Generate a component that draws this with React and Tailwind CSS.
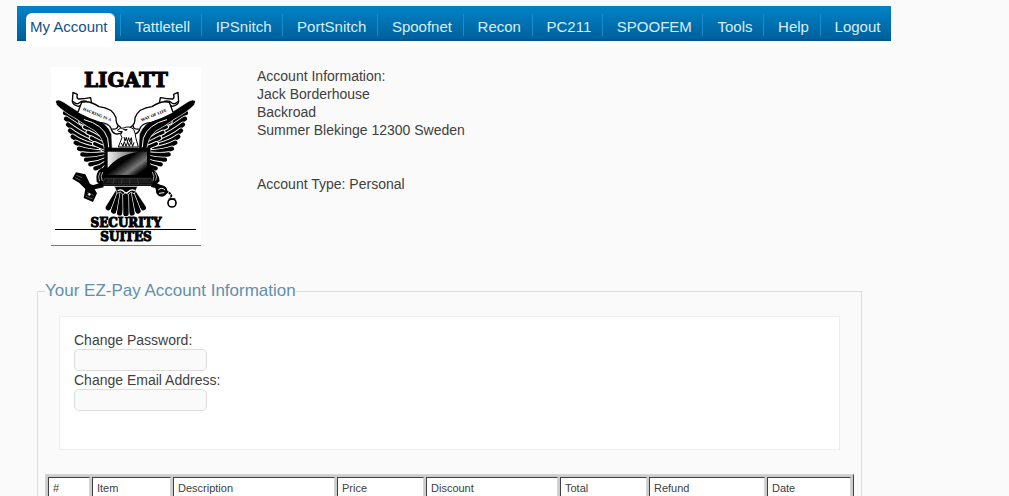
import React, { useState } from "react";

const navItems = [
  "Tattletell",
  "IPSnitch",
  "PortSnitch",
  "Spoofnet",
  "Recon",
  "PC211",
  "SPOOFEM",
  "Tools",
  "Help",
  "Logout",
];

const columns = [
  { name: "#", width: "w-[42px]" },
  { name: "Item", width: "w-[79px]" },
  { name: "Description", width: "w-[162px]" },
  { name: "Price", width: "w-[87px]" },
  { name: "Discount", width: "w-[132px]" },
  { name: "Total", width: "w-[87px]" },
  { name: "Refund", width: "w-[116px]" },
  { name: "Date", width: "w-[84px]" },
];

// outer row of feathers, from the wing tip down to the body
const longFeathers = [
  "M42 84 Q70 96 108 130",
  "M45 101 Q70 118 112 146",
  "M51 119 Q74 138 118 160",
  "M57 137 Q80 156 124 173",
  "M65 155 Q88 172 130 183",
  "M74 173 Q96 186 138 193",
  "M84 191 Q108 199 146 202",
  "M94 208 Q118 212 156 208",
  "M105 224 Q128 225 160 217",
  "M118 238 Q140 237 162 226",
  "M133 250 Q148 248 164 236",
  "M148 261 Q156 259 165 248",
];

const shortFeathers = [
  "M80 96 Q96 102 116 122",
  "M90 111 Q106 117 130 136",
  "M101 126 Q118 132 140 150",
  "M111 142 Q128 149 150 164",
  "M121 159 Q136 167 158 178",
  "M131 176 Q146 183 164 190",
];

const tailFeathers = [
  "M202 320 L172 368",
  "M245 320 L277 368",
  "M208 322 L188 378",
  "M239 322 L261 378",
  "M216 324 L206 384",
  "M232 324 L243 384",
  "M224 325 L225 386",
];

const Wing = () => (
  <g fill="none" strokeLinecap="round">
    <path d="M36 66 Q60 112 84 152 Q106 200 140 232 L166 232 V130 L100 88Z" fill="#000" />
    {longFeathers.map((d) => (
      <g key={d}>
        <path d={d} stroke="#fff" strokeWidth="18" />
        <path d={d} stroke="#000" strokeWidth="13" />
      </g>
    ))}
    {shortFeathers.map((d) => (
      <g key={d}>
        <path d={d} stroke="#fff" strokeWidth="16" />
        <path d={d} stroke="#000" strokeWidth="10" />
      </g>
    ))}
    <path
      d="M14 49 Q20 40 36 50 L76 76 Q102 94 130 100 Q168 112 182 148 L184 194 L160 194 Q156 156 132 138 Q106 124 76 102 Q36 80 17 60Z"
      fill="#000"
      stroke="#fff"
      strokeWidth="2"
    />
    <path d="M100 104 Q156 118 170 160 L173 186" stroke="#fff" strokeWidth="3" />
  </g>
);

const Ribbon = () => (
  <g fill="#fff" stroke="#000" strokeWidth="4" strokeLinejoin="round">
    <path d="M66 22 L79 28 Q76 39 82 42 Q98 42 119 38 L122 57 Q96 58 82 64 Q66 60 64 50Z" />
    <path d="M66 49 Q75 60 84 54 Q94 45 108 49" fill="none" />
    <path d="M92 52 Q114 45 144 65 Q184 69 195 98 Q194 119 208 126 L213 143 Q187 155 180 130 Q174 114 146 112 Q114 102 80 84Z" />
    <path d="M184 132 Q200 134 201 122" fill="none" />
  </g>
);

const Logo = () => (
  <svg viewBox="0 0 150 178" className="block w-[150px] h-[178px] bg-white" role="img" aria-label="Ligatt Security Suites">
    <defs>
      <linearGradient id="screen" x1="0" y1="0" x2="1" y2="0.8">
        <stop offset="0" stopColor="#222" />
        <stop offset="0.45" stopColor="#000" />
        <stop offset="0.75" stopColor="#777" />
        <stop offset="0.95" stopColor="#000" />
      </linearGradient>
      <linearGradient id="glare" x1="0" y1="0" x2="1" y2="0">
        <stop offset="0" stopColor="#eee" />
        <stop offset="1" stopColor="#555" />
      </linearGradient>
    </defs>

    <g fontFamily="'DejaVu Serif', serif" fontWeight="700" textAnchor="middle" stroke="#000" strokeWidth="1">
      <text x="75" y="20" fontSize="20">LIGATT</text>
      <text x="75" y="160" fontSize="12">SECURITY</text>
      <text x="75" y="174" fontSize="12">SUITES</text>
    </g>
    <path d="M4 162.5 H145" stroke="#000" />

    <g transform="translate(0 18) scale(0.3333)">
      <Wing />
      <g transform="translate(447 0) scale(-1 1)">
        <Wing />
      </g>
      <Ribbon />
      <g transform="translate(447 0) scale(-1 1)">
        <Ribbon />
      </g>
      <g fontFamily="'DejaVu Serif', serif" fontWeight="700" fontSize="11" textAnchor="middle">
        <text transform="translate(137 92) rotate(22)">HACKING IS A</text>
        <text transform="translate(310 94) rotate(-22)">WAY OF LIFE</text>
      </g>

      {/* head */}
      <path
        d="M199 136 Q207 127 219 129 Q234 121 248 133 Q254 145 254 157 L262 186 H202 L213 158 L209 149 L214 140 L203 139Z"
        fill="#fff"
        stroke="#000"
        strokeWidth="3"
      />
      <path d="M213 133 L230 132 L226 138Z" />
      <path
        d="M219 156 l3 12 l4 -11 l3 13 l4 -12 l3 12 l5 -12 l2 14 M211 174 l5 10 l4 -14 l5 14 l5 -13 l5 13 l5 -14 l5 14 l4 -12"
        fill="none"
        stroke="#000"
        strokeWidth="3"
      />

      {/* tail */}
      <g fill="none" strokeLinecap="round">
        {tailFeathers.map((d) => (
          <g key={d}>
            <path d={d} stroke="#fff" strokeWidth="20" />
            <path d={d} stroke="#000" strokeWidth="16" />
          </g>
        ))}
      </g>
      <path d="M190 304 H260 L250 327 L240 321 L232 329 L224 322 L216 329 L208 321 L199 325Z" stroke="#fff" strokeWidth="2" />
      <path d="M200 317 Q212 311 219 320 Q226 328 232 320 Q241 311 252 317" fill="none" stroke="#fff" strokeWidth="4" />

      {/* laptop */}
      <path d="M150 250 Q132 264 137 290 L152 303 H312 L326 288 Q324 262 300 248Z" />
      <path d="M147 262 Q139 275 146 289 M155 261 Q147 275 154 288 M312 262 Q321 274 314 287 M304 261 Q313 274 306 287" fill="none" stroke="#fff" strokeWidth="2" />
      <rect x="160" y="188" width="138" height="90" rx="3" />
      <rect x="170" y="200" width="118" height="70" fill="url(#screen)" />
      <path d="M170 200 H264 Q203 207 170 249Z" fill="url(#glare)" />
      <path d="M161 280 H299 L310 300 H153Z" fill="#111" stroke="#888" strokeWidth="1" />
      <path d="M168 285 H294 M164 291 H299 M190 280 L186 297 M213 280 L211 297 M236 280 V297 M259 280 L263 297" fill="none" stroke="#666" strokeWidth="1" />

      {/* left claw with the plug */}
      <path d="M155 291 L128 300 Q117 300 114 290 L103 268 L75 262 L64 281 L84 293 L103 312 L98 339 L126 351 L138 325 L131 313 L158 307Z" />
      <path d="M76 271 L93 278 M72 278 L88 286 M109 322 L128 331 M105 334 L125 342" stroke="#888" strokeWidth="2" />
      <circle cx="115" cy="328" r="5" fill="#fff" stroke="#000" strokeWidth="2" />

      {/* right claw with the handcuffs */}
      <path d="M306 290 L328 299 L345 308 L350 324 L337 333 L318 326 L313 309 L300 306Z" />
      <circle cx="332" cy="318" r="14" fill="none" stroke="#000" strokeWidth="6" />
      <path d="M322 315 Q332 305 342 315 M324 325 L340 323" fill="none" stroke="#fff" strokeWidth="3" />
      <path d="M345 319 Q357 323 361 331 L359 341" fill="none" stroke="#000" strokeWidth="6" strokeDasharray="7 2" />
      <circle cx="363" cy="354" r="12" fill="#fff" stroke="#000" strokeWidth="5" />
      <path d="M353 343 L373 342" stroke="#000" strokeWidth="5" />
    </g>
  </svg>
);

const Nav = () => (
  <nav className="bg-white pb-[6px]">
    <ul className="flex items-end h-[35px] pl-[9px] text-[15px] leading-7 bg-linear-to-b from-[#0084c7] to-[#00609c] border-b-2 border-[#00568f]">
      <li className="-mb-[2px] mr-[5px] z-10">
        <a href="#" className="block w-[89px] h-7 px-1 rounded-t-[6px] bg-white text-[#0f528c] whitespace-nowrap">
          My Account
        </a>
      </li>
      {navItems.map((item) => (
        <li key={item} className="grow mb-[3px] h-[22px] border-l border-[#1a8bd0] pl-[14px] pr-[10px]">
          <a href="#" className="block leading-[26px] text-[#d9edf8]">
            {item}
          </a>
        </li>
      ))}
    </ul>
  </nav>
);

const App = () => {
  const [form, setForm] = useState({ password: "", email: "" });

  const handleChange = (e) => {
    setForm({ ...form, [e.target.name]: e.target.value });
  };

  return (
    <div className="min-h-screen bg-[#fafafa] pt-[6px] pl-[17px] font-['Liberation_Sans',Arial,sans-serif] text-sm leading-[18px] text-[#404040]">
      <div className="max-w-[874px]">
        <Nav />

        <div className="flex gap-14 pt-5 pl-[34px]">
          <a href="#" className="shrink-0 border-b border-[#777]">
            <Logo />
          </a>
          <div>
            <p>Account Information:</p>
            <p>Jack Borderhouse</p>
            <p>Backroad</p>
            <p>Summer Blekinge 12300 Sweden</p>
            <p className="mt-9">Account Type: Personal</p>
          </div>
        </div>

        <fieldset className="mt-[33px] ml-5 mr-[29px] px-[7px] border border-[#ddd]">
          <legend className="text-[17px] leading-6 text-[#638fab]">Your EZ-Pay Account Information</legend>

          <form className="mx-[14px] mt-[13px] px-[14px] pt-[14px] pb-[38px] bg-white border border-[#eee]">
            <label htmlFor="password" className="block">
              Change Password:
            </label>
            <input
              id="password"
              name="password"
              type="password"
              value={form.password}
              onChange={handleChange}
              className="block w-[133px] h-[22px] px-1 bg-[#fafafa] border border-[#ddd] rounded-[5px]"
            />
            <label htmlFor="email" className="block">
              Change Email Address:
            </label>
            <input
              id="email"
              name="email"
              type="text"
              value={form.email}
              onChange={handleChange}
              className="block w-[133px] h-[22px] px-1 bg-[#fafafa] border border-[#ddd] rounded-[5px]"
            />
          </form>

          <table className="mt-6 w-full table-fixed border-separate border-spacing-[2px] bg-[#ccc] border border-t-[#d5d5d5] border-l-[#d5d5d5] border-r-[#404040] border-b-[#404040] text-[11px] leading-[14px]">
            <thead>
              <tr>
                {columns.map((col) => (
                  <th
                    key={col.name}
                    className={`${col.width} px-1 py-[3px] text-left font-normal bg-white border border-t-[#404040] border-l-[#404040] border-r-[#d5d5d5] border-b-[#d5d5d5]`}
                  >
                    {col.name}
                  </th>
                ))}
              </tr>
            </thead>
          </table>
        </fieldset>
      </div>
    </div>
  );
};

export default App;
